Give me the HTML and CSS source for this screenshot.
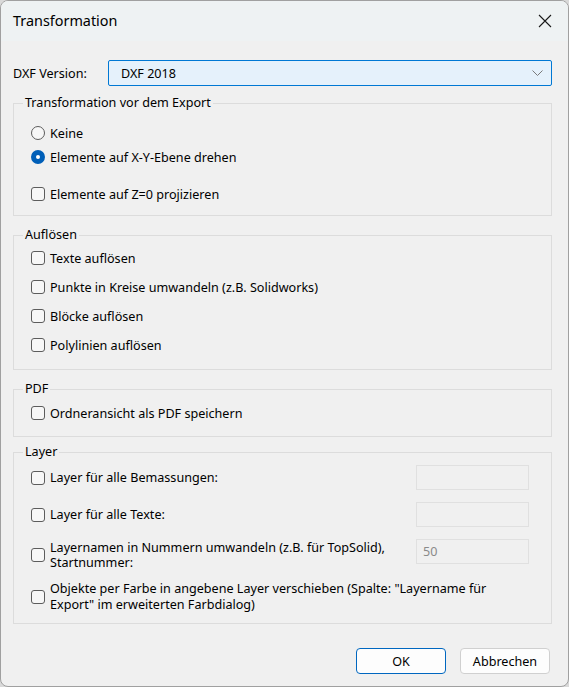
FILE: index.html
```html
<!DOCTYPE html>
<html lang="de">
<head>
<meta charset="utf-8">
<title>Transformation</title>
<link rel="stylesheet" href="styles.css">
</head>
<body>
<div class="window">
  <div class="titlebar">
    <span class="title">Transformation</span>
    <svg class="close" width="14" height="14" viewBox="0 0 14 14"><path d="M1 1 L13 13 M13 1 L1 13" stroke="#1a1a1a" stroke-width="1.1" fill="none"/></svg>
  </div>
  <div class="content">
    <div class="version-row">
      <span class="label">DXF Version:</span>
      <div class="select">
        <span>DXF 2018</span>
        <svg class="chev" width="11" height="6" viewBox="0 0 11 6"><path d="M0.5 0.5 L5.5 5.5 L10.5 0.5" stroke="#7a7a7a" stroke-width="1" fill="none"/></svg>
      </div>
    </div>

    <fieldset class="group g1">
      <legend>Transformation vor dem Export</legend>
      <div class="row"><span class="radio"></span>Keine</div>
      <div class="row"><span class="radio on"></span>Elemente auf X-Y-Ebene drehen</div>
      <div class="row gap13"><span class="check"></span>Elemente auf Z=0 projizieren</div>
    </fieldset>

    <fieldset class="group g2">
      <legend>Auflösen</legend>
      <div class="row"><span class="check"></span>Texte auflösen</div>
      <div class="row"><span class="check"></span>Punkte in Kreise umwandeln (z.B. Solidworks)</div>
      <div class="row"><span class="check"></span>Blöcke auflösen</div>
      <div class="row"><span class="check"></span>Polylinien auflösen</div>
    </fieldset>

    <fieldset class="group g3">
      <legend>PDF</legend>
      <div class="row"><span class="check"></span>Ordneransicht als PDF speichern</div>
    </fieldset>

    <fieldset class="group g4">
      <legend>Layer</legend>
      <div class="lrow r1"><div class="opt"><span class="check"></span><span>Layer für alle Bemassungen:</span></div><div class="field"></div></div>
      <div class="lrow r2"><div class="opt"><span class="check"></span><span>Layer für alle Texte:</span></div><div class="field"></div></div>
      <div class="lrow r3"><div class="opt"><span class="check"></span><span class="multi">Layernamen in Nummern umwandeln (z.B. für TopSolid),<br>Startnummer:</span></div><div class="field num">50</div></div>
      <div class="lrow r4"><div class="opt"><span class="check"></span><span class="multi">Objekte per Farbe in angebene Layer verschieben (Spalte: "Layername für<br>Export" im erweiterten Farbdialog)</span></div></div>
    </fieldset>

    <div class="buttons">
      <button class="btn primary">OK</button>
      <button class="btn">Abbrechen</button>
    </div>
  </div>
</div>
</body>
</html>
```

FILE: styles.css
```css
html, body {
  margin: 0;
  padding: 0;
  background: #d9d9d9;
}
body {
  width: 569px;
  height: 687px;
  overflow: hidden;
  font-family: "Noto Sans", "Liberation Sans", sans-serif;
  font-size: 12.6px;
  color: #000;
}
.window {
  width: 567px;
  height: 685px;
  border: 1px solid #a0a0a0;
  border-radius: 8px;
  background: #f0f0f0;
  overflow: hidden;
  box-sizing: content-box;
}
.titlebar {
  height: 40px;
  background: #eef2f3;
  display: flex;
  align-items: center;
  justify-content: space-between;
  padding: 0 16px 0 12px;
}
.title {
  font-size: 14.4px;
  margin-top: -1px;
}
.close {
  display: block;
}
.content {
  padding: 19px 16px 0 12px;
}
.version-row {
  display: flex;
  align-items: center;
  height: 26px;
}
.label {
  width: 95px;
}
.select {
  flex: 1;
  height: 24px;
  border: 1px solid #0078d4;
  border-radius: 2px;
  background: #e5f1fb;
  display: flex;
  align-items: center;
  justify-content: space-between;
  padding: 0 8px 0 12px;
}
.chev { display: block; }
.group {
  margin: 0;
  border: 1px solid #dcdcdc;
  border-radius: 0;
  padding: 0 0 0 17px;
  min-width: 0;
}
.group legend {
  padding: 0 2px;
  margin-left: -8px;
  line-height: 14px;
  height: 14px;
}
.g1 { margin-top: 10px; padding-top: 11px; padding-bottom: 9px; }
.g2 { margin-top: 12px; padding-top: 4px; padding-bottom: 12px; display: flex; flex-direction: column; gap: 5px; }
.g3 { margin-top: 12px; padding-top: 5px; padding-bottom: 11px; }
.g4 { margin-top: 8px; padding-top: 6px; padding-bottom: 10px; }
.row {
  height: 24px;
  display: flex;
  align-items: center;
}
.gap13 { margin-top: 13px; }
.radio, .check {
  width: 12px;
  height: 12px;
  border: 1px solid #5c5c5c;
  background: #f7f7f7;
  margin-right: 5px;
  flex: none;
  box-sizing: content-box;
}
.check { border-radius: 3px; }
.radio { border-radius: 50%; }
.radio.on {
  width: 4px;
  height: 4px;
  border: 5px solid #005fb8;
  background: #ffffff;
}
.lrow {
  display: flex;
  align-items: center;
  justify-content: space-between;
  padding-right: 22px;
}
.opt {
  display: flex;
  align-items: center;
}
.multi { line-height: 15px; }
.r1 { height: 25px; }
.r2 { height: 25px; margin-top: 12px; }
.r3 { height: 32px; margin-top: 12px; }
.r4 { height: 32px; margin-top: 10px; }
.r4 .multi { line-height: 16px; }
.field {
  height: 23px;
  border: 1px solid #e0e0e0;
  background: #f0f0f0;
  color: #8a8a8a;
  display: flex;
  align-items: center;
  padding-left: 6px;
  box-sizing: content-box;
  width: 105px;
}
.r3 .field { margin-bottom: 7px; }
.buttons {
  display: flex;
  justify-content: flex-end;
  gap: 14px;
  margin-top: 24px;
  padding-right: 2px;
}
.btn {
  width: 90px;
  height: 26px;
  font-family: inherit;
  font-size: 12.6px;
  background: #fdfdfd;
  border: 1px solid #d0d0d0;
  border-radius: 4px;
  padding: 0;
  color: #000;
}
.btn.primary {
  border: 1px solid #0067c0;
}
```
